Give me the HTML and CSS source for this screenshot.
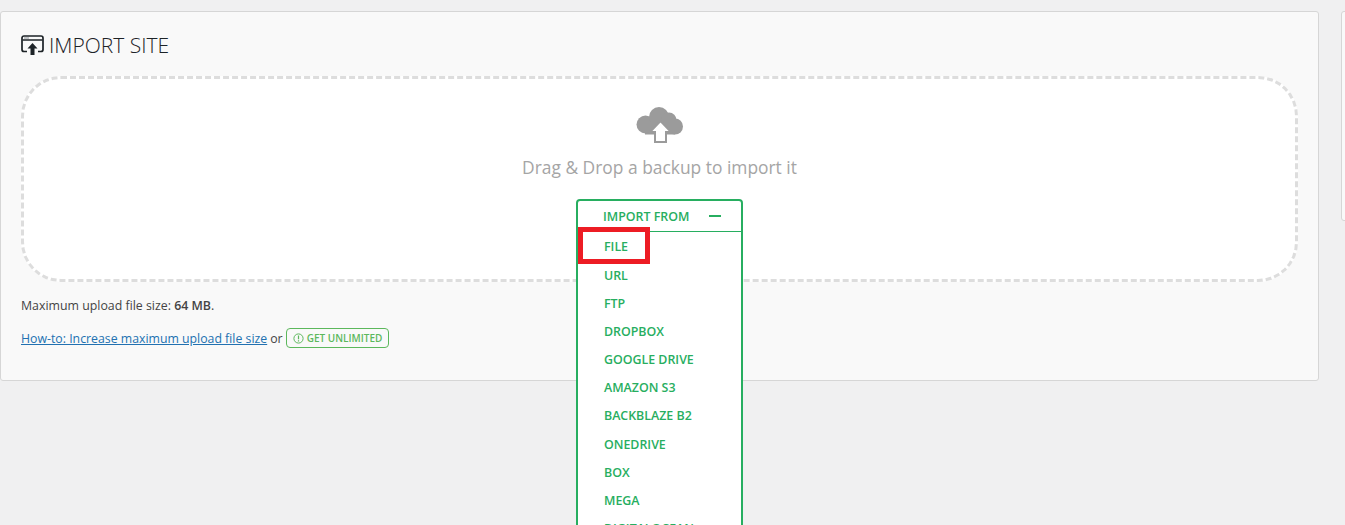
FILE: index.html
```html
<!DOCTYPE html>
<html lang="en">

<head>
    <meta charset="UTF-8">
    <title>Import Site</title>
    <link rel="stylesheet" href="styles.css">
</head>

<body>
    <div class="wrap">
        <div class="mainCard">
            <h1 class="pageTitle">
                <svg class="titleIcon" width="24" height="20" viewBox="0 0 24 20">
                    <path d="M6 16.500H3a2 2 0 0 1-2-2V3a2 2 0 0 1 2-2h17a2 2 0 0 1 2 2v11.500a2 2 0 0 1-2 2h-3" fill="none" stroke="#1d2327" stroke-width="1.700"/>
                    <path d="M1.500 5h20" stroke="#1d2327" stroke-width="1.500"/>
                    <path d="M3 3h5" stroke="#8a8f94" stroke-width="1"/>
                    <path d="M11.500 8l5 5.500h-3V20h-4v-6.500h-3z" fill="#1d2327"/>
                </svg>
                <span>IMPORT SITE</span>
            </h1>

            <div class="dropZone">
                <svg class="cloudIcon" width="48" height="38" viewBox="0 0 48 38">
                    <circle cx="9.500" cy="18.500" r="9" fill="#9b9b9b"/>
                    <circle cx="23" cy="11" r="10" fill="#9b9b9b"/>
                    <circle cx="33" cy="14" r="7.500" fill="#9b9b9b"/>
                    <circle cx="39" cy="20.500" r="8" fill="#9b9b9b"/>
                    <rect x="9" y="16" width="30" height="12.500" fill="#9b9b9b"/>
                    <path d="M24.500 15L35 26H30V36H19V26H14z" fill="#fff" stroke="#9b9b9b" stroke-width="2"/>
                </svg>
                <p class="dropText">Drag &amp; Drop a backup to import it</p>

                <div class="importBox">
                    <div class="importHead">
                        <span>IMPORT FROM</span>
                        <span class="minus"></span>
                    </div>
                    <ul class="importList">
                        <li class="marked">FILE</li>
                        <li>URL</li>
                        <li>FTP</li>
                        <li>DROPBOX</li>
                        <li>GOOGLE DRIVE</li>
                        <li>AMAZON S3</li>
                        <li>BACKBLAZE B2</li>
                        <li>ONEDRIVE</li>
                        <li>BOX</li>
                        <li>MEGA</li>
                        <li>DIGITALOCEAN</li>
                    </ul>
                </div>
            </div>

            <p class="maxSize">Maximum upload file size: <strong>64 MB</strong>.</p>
            <p class="howTo">
                <a href="#">How-to: Increase maximum upload file size</a> or
                <a href="#" class="unlimited">
                    <svg width="11" height="11" viewBox="0 0 11 11">
                        <circle cx="5.500" cy="5.500" r="4.600" fill="none" stroke="#5cb85c" stroke-width="1"/>
                        <path d="M5.500 2.600v3.600M5.500 7.300v1.200" stroke="#5cb85c" stroke-width="1.200"/>
                    </svg>
                    GET UNLIMITED
                </a>
            </p>
        </div>
        <div class="sideCard"></div>
    </div>
</body>

</html>
```

FILE: styles.css
```css
* {
    margin: 0px;
    padding: 0px;
    box-sizing: border-box;
    font-family: "Open Sans", sans-serif;
}

html,
body {
    height: 525px;
    overflow: hidden;
}

body {
    background-color: #f0f0f1;
    color: #3c434a;
}

.wrap {
    display: flex;
    align-items: flex-start;
    gap: 22px;
    padding-top: 11px;
    width: 1400px;
}

.mainCard {
    width: 1319px;
    height: 370px;
    flex-shrink: 0;
    padding: 19px 20px 0px 20px;
    background-color: #f9f9f9;
    border: 1px solid #d6d6d6;
    border-radius: 3px;
}

.sideCard {
    width: 200px;
    height: 210px;
    background-color: #f9f9f9;
    border: 1px solid #d6d6d6;
    border-radius: 3px;
}

.pageTitle {
    display: flex;
    align-items: center;
    gap: 4px;
    height: 28px;
    font-size: 21px;
    font-weight: 300;
    color: #1d2327;
}

.titleIcon {
    flex-shrink: 0;
}

.dropZone {
    position: relative;
    width: 1277px;
    height: 206px;
    margin-top: 17px;
    padding-top: 27px;
    text-align: center;
    background-color: #fff;
    border: 3px dashed #ddd;
    border-radius: 40px;
}

.cloudIcon {
    display: block;
    margin: 0 auto;
}

.dropText {
    margin-top: 11px;
    font-size: 17.4px;
    line-height: 24px;
    color: #a5a5a5;
}

.importBox {
    position: absolute;
    top: 120px;
    left: 552px;
    width: 167px;
    background-color: #fff;
    border: 2px solid #27ae60;
    border-radius: 4px;
    color: #27ae60;
    text-align: left;
    font-size: 12.4px;
    font-weight: 600;
}

.importHead {
    display: flex;
    align-items: center;
    justify-content: space-between;
    height: 31px;
    padding: 0px 20px 0px 25px;
    border-bottom: 1px solid #27ae60;
}

.minus {
    width: 12px;
    height: 2px;
    background-color: #27ae60;
}

.importList {
    list-style: none;
}

.importList li {
    height: 28.1px;
    line-height: 28px;
    padding-left: 26px;
}

.importList .marked {
    width: 72px;
    height: 37px;
    margin-top: -5px;
    margin-bottom: -2px;
    line-height: 29px;
    padding-left: 21px;
    border: 5px solid #ed1c24;
}

.maxSize {
    margin-top: 15px;
    font-size: 12.35px;
    line-height: 18px;
    color: #444;
}

.maxSize strong {
    font-weight: 600;
}

.howTo {
    display: flex;
    align-items: center;
    gap: 3px;
    margin-top: 13px;
    font-size: 12.3px;
    color: #444;
}

.howTo a {
    color: #2271b1;
}

.howTo .unlimited {
    display: flex;
    align-items: center;
    gap: 3px;
    height: 20px;
    padding: 0px 6px;
    font-size: 10px;
    font-weight: 600;
    color: #5cb85c;
    text-decoration: none;
    border: 1px solid #5cb85c;
    border-radius: 4px;
}
```
